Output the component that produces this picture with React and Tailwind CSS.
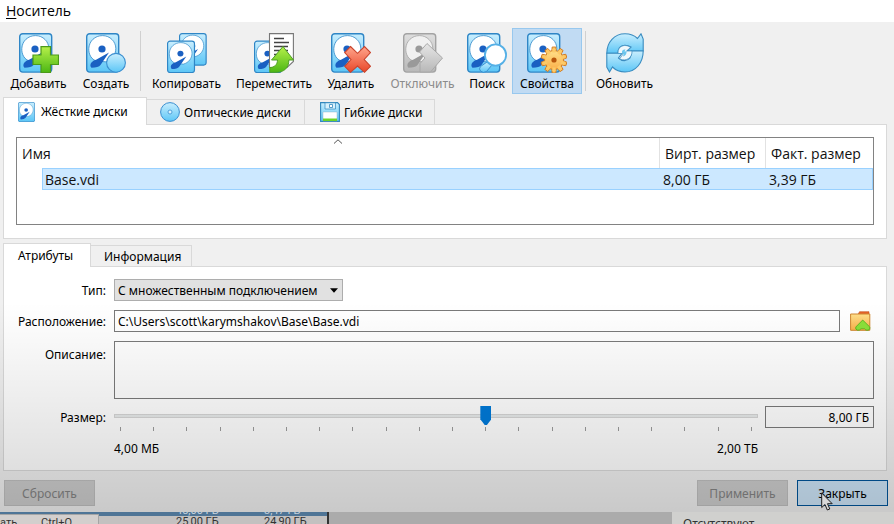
function Gradients() {
  const list = [
    ["blue", "#c9eefe", "#5cc6f6"],
    ["gray", "#dedede", "#b9b9b9"],
    ["green", "#b6f04a", "#4cb714"],
    ["red", "#ffa58c", "#e8482a"],
    ["orange", "#ffe08a", "#fbb04a"],
    ["silver", "#e6e6e6", "#b8b8b8"],
  ];
  return (
    <svg className="absolute size-0" aria-hidden="true">
      <defs>
        {list.map(([id, from, to]) => (
          <linearGradient key={id} id={id} x1="0" y1="0" x2="0" y2="1">
            <stop offset="0" stopColor={from} />
            <stop offset="1" stopColor={to} />
          </linearGradient>
        ))}
      </defs>
    </svg>
  );
}

function Disk({ transform, gray }) {
  const line = gray ? "#a3a3a3" : "#2f86c6";
  const dark = gray ? "#9a9a9a" : "#1a60c2";
  return (
    <g transform={transform}>
      <rect x="0.7" y="0.7" width="32" height="38.4" rx="3" fill={gray ? "url(#gray)" : "url(#blue)"} stroke={line} strokeWidth="1.4" />
      <path d="M10.500 28C5.500 26.500 2.500 21.500 2.800 15.500C3.200 8 9 2.600 16.500 2.600C24 2.600 29.800 8.500 29.800 15.500C29.800 21.500 26 27 19.500 28.800Z" fill={gray ? "#f1f1f1" : "#fff"} stroke={line} strokeWidth="0.8" />
      <circle cx="16" cy="16" r="3.6" fill={dark} />
      <path d="M23 19.500L14.500 32Q12.500 34.800 5.500 34.800Q3.500 33 5 30Q7 27 10.500 26.500Z" fill={dark} />
    </g>
  );
}

const teeth = [0, 36, 72, 108, 144, 180, 216, 252, 288, 324];

function Icon({ kind }) {
  return (
    <svg viewBox="0 0 40 40" className="size-10 shrink-0" aria-hidden="true">
      {["add", "create", "remove", "search", "props"].includes(kind) && <Disk />}
      {kind === "add" && (
        <path d="M22 13.700h9.500v8.300h8v9.500h-8v8h-9.500v-8h-8v-9.500h8z" fill="url(#green)" stroke="#4b9a1a" strokeWidth="1.2" />
      )}
      {kind === "create" && <circle cx="30" cy="29.800" r="9.400" fill="url(#blue)" stroke="#3b8fd0" strokeWidth="1.100" />}
      {kind === "copy" && (
        <>
          <Disk transform="translate(12 0) scale(.83 .82)" />
          <Disk transform="translate(0 7.500) scale(.84 .82)" />
        </>
      )}
      {kind === "move" && (
        <>
          <Disk transform="translate(0 7.500) scale(.84 .82)" />
          <path d="M15.500 .6H39.400V28.500L33 34.500H15.500Z" fill="#fff" stroke="#777" strokeWidth="1.100" />
          <path d="M20 5.500h10M20 9.500h15M20 13.500h14M20 17.500h14M20 21.500h6" stroke="#444" strokeWidth="1.300" />
          <path d="M29 13.500L39.500 27H34.800C35 35 30 39.300 22 39.300H15.800V34.500C20 34.500 23.500 32 23.500 27H17.500Z" fill="url(#green)" stroke="#4ea024" strokeWidth="1" />
        </>
      )}
      {kind === "remove" && (
        <path d="M19.500 13.500L26.500 20.300L33.500 13.500L39.500 19.500L33.200 26.500L39.500 33.300L33.500 39.300L26.500 33L19.500 39.300L13.700 33.300L20 26.500L13.700 19.500Z" fill="url(#red)" stroke="#c9432b" strokeWidth="1.100" />
      )}
      {kind === "eject" && (
        <>
          <Disk gray />
          <path d="M24 10.500L39.500 25L27.500 39H17V30.500L22 25L16.500 19Z" fill="url(#silver)" stroke="#a8a8a8" strokeWidth="1" />
        </>
      )}
      {kind === "search" && (
        <>
          <path d="M20 29L25 32L19.500 38.500Q16 40.500 13.500 38Q11.500 36 13.500 33.500Z" fill="url(#blue)" stroke="#3b8fd0" strokeWidth="1" />
          <circle cx="28.500" cy="22" r="10.600" fill="#fff" stroke="#55b0e6" strokeWidth="1.800" />
        </>
      )}
      {kind === "props" && (
        <>
          {teeth.map((a) => (
            <path key={a} d="M24.700 18.500L25.200 14H28.800L29.300 18.500Z" fill="#fdc660" stroke="#d07a22" strokeWidth=".9" transform={`rotate(${a} 27 27)`} />
          ))}
          <circle cx="27" cy="27" r="9.500" fill="url(#orange)" stroke="#d07a22" strokeWidth=".9" />
          {teeth.map((a) => (
            <path key={a} d="M25.300 19.500V16H28.700V19.500Z" fill="#fdca68" transform={`rotate(${a} 27 27)`} />
          ))}
          <circle cx="27" cy="27" r="2.600" fill="#b8560c" />
        </>
      )}
      {kind === "refresh" && (
        <g stroke="#3a8cc0" strokeWidth="1.100">
          <path d="M1.800 20.300C1.800 9 9.500 .8 20 .8C25.500 .8 29.500 2.500 32.500 5.500L36 .8L38.200 6V18H22L26 14C22 11.500 17 11.500 14.500 14.500Q13 16.500 13 20.300Z" fill="url(#blue)" />
          <path d="M38.200 18C38.200 30 30.500 39 20 39C14.500 39 10.500 37 7.500 34L4.500 39L1.800 34V20.300H17L13.500 25C17 28.500 22 28.500 25 25Q26.500 22.500 26.500 18Z" fill="url(#blue)" />
          <path d="M14 15.500C17.500 11.500 22 11.800 25.500 14.500L21.500 18H27C27.500 24 22 29 14.500 26L18.500 20.500H13Q13 17 14 15.500Z" fill="#f0f8fc" strokeWidth=".7" />
          <path d="M17 20.500V18.500Q17.500 16 20.500 16.500L19.500 18.500L21.500 18.200Q22 22 18 23.500L18.800 20.500Z" fill="#6cc6ee" stroke="none" />
        </g>
      )}
    </svg>
  );
}

const actions = [
  { kind: "add", label: "Добавить", size: "w-[73px]" },
  { kind: "create", label: "Создать", size: "w-[62px]" },
  null,
  { kind: "copy", label: "Копировать", size: "w-[85px]" },
  { kind: "move", label: "Переместить", size: "w-[90px]" },
  { kind: "remove", label: "Удалить", size: "w-[64px]" },
  { kind: "eject", label: "Отключить", size: "w-[79px]", disabled: true },
  { kind: "search", label: "Поиск", size: "w-[50px]" },
  { kind: "props", label: "Свойства", size: "w-[70px]", active: true },
  null,
  { kind: "refresh", label: "Обновить", size: "w-[71px]" },
];

function Toolbar() {
  return (
    <div role="toolbar" className="flex px-[2px] pt-[6px] pb-[3px]">
      {actions.map((a, i) =>
        a ? (
          <button
            key={a.kind}
            disabled={a.disabled}
            className={`flex h-[66px] shrink-0 flex-col items-center gap-[3px] border pt-1 disabled:text-[#8b8b8b] ${a.size} ${
              a.active ? "border-[#98c8ee] bg-[#c1dbf3]" : "border-transparent"
            }`}
          >
            <Icon kind={a.kind} />
            <span className="whitespace-nowrap">{a.label}</span>
          </button>
        ) : (
          <span key={i} className="mx-[3px] mt-[3px] h-[60px] w-px shrink-0 bg-[#d0d0d0]" />
        )
      )}
    </div>
  );
}

function Tab({ selected, className, children }) {
  return (
    <button
      role="tab"
      aria-selected={!!selected}
      className={`flex items-center border border-b-0 border-[#d9d9d9] ${
        selected ? "relative -mb-px self-stretch bg-white" : "mt-[2px] -ml-px bg-[#f0f0f0]"
      } ${className}`}
    >
      {children}
    </button>
  );
}

const ticks = Array.from({ length: 20 }, (_, i) => i);

function MediaTable() {
  return (
    <div className="h-[88px] border border-[#828282] bg-white font-['Open_Sans','Noto_Sans',sans-serif] text-sm leading-[22px] text-[#111]">
      <table className="w-full table-fixed border-separate border-spacing-0 text-left">
        <colgroup>
          <col />
          <col className="w-[106px]" />
          <col className="w-[107px]" />
        </colgroup>
        <thead>
          <tr className="h-[30px]">
            <th className="relative border-r border-[#e2e2e2] pt-px pl-[5px] font-normal">
              Имя
              <svg viewBox="0 0 9 5" className="absolute top-px left-1/2 h-[5px] w-[9px] -translate-x-1/2" aria-hidden="true">
                <path d="M.5 4.500L4.500 .8L8.500 4.500" fill="none" stroke="#555" />
              </svg>
            </th>
            <th className="border-r border-[#e2e2e2] pt-px pl-[5px] font-normal whitespace-nowrap">Вирт. размер</th>
            <th className="pt-px pl-[5px] font-normal whitespace-nowrap">Факт. размер</th>
          </tr>
        </thead>
        <tbody>
          <tr>
            <td className="pl-[25px]">
              <div className="h-[22px] border border-r-0 border-[#99d1ff] bg-[#cce8ff] pl-[2px]">Base.vdi</div>
            </td>
            <td>
              <div className="h-[22px] border-y border-[#99d1ff] bg-[#cce8ff] pl-[3px]">8,00 ГБ</div>
            </td>
            <td>
              <div className="h-[22px] border border-l-0 border-[#99d1ff] bg-[#cce8ff] pl-[3px]">3,39 ГБ</div>
            </td>
          </tr>
        </tbody>
      </table>
    </div>
  );
}

export default function App() {
  return (
    <div className="overflow-hidden bg-[#ababab] font-['Noto_Sans',sans-serif] text-xs leading-4 text-black">
      <Gradients />
      <main className="relative bg-[#f0f0f0]">
        <nav className="flex h-[22px] items-center bg-white px-[6px]">
          <button className="font-['Open_Sans','Noto_Sans',sans-serif] text-sm leading-5">
            <span className="underline underline-offset-2">Н</span>оситель
          </button>
        </nav>
        <Toolbar />

        <section className="mr-[7px] ml-[3px]">
          <div role="tablist" className="flex h-[27px]">
            <Tab selected className="w-[144px] gap-[6px] pl-[14px]">
              <svg viewBox="0 0 33.400 39.800" preserveAspectRatio="none" className="h-5 w-[17px]" aria-hidden="true">
                <Disk />
              </svg>
              Жёсткие диски
            </Tab>
            <Tab className="w-[159px] gap-1 pl-[13px]">
              <svg viewBox="0 0 20 20" className="size-5" aria-hidden="true">
                <circle cx="10" cy="10" r="9.400" fill="url(#blue)" stroke="#3b8fd0" />
                <circle cx="10" cy="10" r="2" fill="#d9f3ff" stroke="#3b8fd0" strokeWidth=".8" />
              </svg>
              <span className="pt-px">Оптические диски</span>
            </Tab>
            <Tab className="w-[131px] gap-1 pl-[15px]">
              <svg viewBox="0 0 20 20" className="size-5" aria-hidden="true">
                <path d="M.6 .6H17.500L19.400 2.500V19.400H.6Z" fill="url(#blue)" stroke="#3187bd" strokeWidth="1.100" />
                <path d="M5 .8H15.500V7H5Z" fill="#d8f1fc" stroke="#3187bd" strokeWidth=".7" />
                <path d="M9.500 2.500H12.500V5.500H9.500Z" fill="#fff" stroke="#3187bd" strokeWidth=".8" />
                <path d="M3 10H17V19H3Z" fill="#fff" stroke="#8ab" strokeWidth=".4" />
                <path d="M3 16.500H17V19H3Z" fill="#6bd42a" />
              </svg>
              <span className="pt-px">Гибкие диски</span>
            </Tab>
          </div>
          <div className="border border-[#d9d9d9] bg-white px-3 pt-3 pb-[13px]">
            <MediaTable />
          </div>
        </section>

        <section className="mt-1 mr-[7px] ml-[3px]">
          <div role="tablist" className="flex h-[23px]">
            <Tab selected className="w-[88px] pl-[14px]">Атрибуты</Tab>
            <Tab className="w-[102px] pl-[13px]">
              <span className="pt-px">Информация</span>
            </Tab>
          </div>
          <div className="grid grid-cols-[90px_1fr] gap-x-2 border border-[#d9d9d9] bg-white px-3 pt-3 pb-[13px]">
            <label htmlFor="type" className="mb-[8px] self-center justify-self-end">Тип:</label>
            <div className="relative mb-[9px] w-[229px]">
              <select id="type" className="block h-[22px] w-full appearance-none border border-[#adadad] bg-[#e1e1e1] pt-px pr-5 pl-[3px]">
                <option>С множественным подключением</option>
              </select>
              <svg viewBox="0 0 8 5" className="pointer-events-none absolute top-[9px] right-[5px] h-[5px] w-2" aria-hidden="true">
                <path d="M0 .3H8L4 4.700Z" />
              </svg>
            </div>

            <label htmlFor="path" className="mb-[8px] self-center justify-self-end whitespace-nowrap">Расположение:</label>
            <div className="mb-[9px] flex">
              <input id="path" defaultValue="C:\Users\scott\karymshakov\Base\Base.vdi" className="h-[22px] min-w-0 flex-1 border border-[#7a7a7a] bg-white px-[3px]" />
              <button aria-label="Выбрать папку" className="flex w-[34px] items-center justify-center pl-[6px]">
                <svg viewBox="0 0 21 20" className="h-5 w-[21px]" aria-hidden="true">
                  <path d="M8 3.500L9.500 .7H19V6H8Z" fill="#e8642a" stroke="#c4501a" strokeWidth=".6" />
                  <path d="M.6 3H19.800V19.300H.6Z" fill="url(#orange)" stroke="#cf8630" strokeWidth="1" />
                  <path d="M12.700 9L19.800 16Q20.500 18.800 18 19.200Q15.500 19.600 14.500 17.800H11Q9.500 19.600 7.500 19.200Q5 18.500 5.800 16Z" fill="#8be03a" stroke="#4fae1c" strokeWidth=".8" />
                </svg>
              </button>
            </div>

            <label htmlFor="about" className="mt-[6px] justify-self-end">Описание:</label>
            <textarea id="about" className="mb-[7px] block h-[58px] w-full resize-none border border-[#7a7a7a] bg-white px-1" />

            <label htmlFor="size" className="mt-[4px] justify-self-end">Размер:</label>
            <div className="flex gap-[7px]">
              <div className="min-w-0 flex-1">
                <input
                  id="size"
                  type="range"
                  min="0"
                  max="19"
                  defaultValue="11"
                  className="block h-5 w-full appearance-none bg-transparent [&::-webkit-slider-runnable-track]:h-1 [&::-webkit-slider-runnable-track]:border [&::-webkit-slider-runnable-track]:border-[#d6d6d6] [&::-webkit-slider-runnable-track]:bg-[#e7eaea] [&::-webkit-slider-thumb]:-mt-[9px] [&::-webkit-slider-thumb]:h-[19px] [&::-webkit-slider-thumb]:w-[11px] [&::-webkit-slider-thumb]:appearance-none [&::-webkit-slider-thumb]:bg-[#007ad9] [&::-webkit-slider-thumb]:[clip-path:polygon(0_0,100%_0,100%_70%,60%_100%,40%_100%,0_70%)]"
                />
                <div className="mt-px flex h-1 justify-between px-[6px]">
                  {ticks.map((t) => (
                    <span key={t} className="h-1 w-px bg-[#9c9c9c]" />
                  ))}
                </div>
                <div className="mt-[10px] flex justify-between">
                  <span>4,00 МБ</span>
                  <span>2,00 ТБ</span>
                </div>
              </div>
              <input aria-label="Размер" defaultValue="8,00 ГБ" className="h-[22px] w-[109px] border border-[#7a7a7a] bg-white px-1 text-right" />
            </div>
          </div>
        </section>

        <footer className="flex gap-[9px] px-[6px] pt-[9px] pb-[6px] pl-1">
          <button disabled className="mr-auto h-[26px] w-[91px] border border-[#bfbfbf] bg-[#cccccc] pt-px text-[#838383]">Сбросить</button>
          <button disabled className="h-[26px] w-[91px] border border-[#bfbfbf] bg-[#cccccc] pt-px text-[#838383]">Применить</button>
          <button className="relative h-[26px] w-[91px] border border-[#005499] bg-[#cce4f7] pt-px">
            Закрыть
            <svg viewBox="0 0 12 19" className="absolute top-[11px] left-[23px] h-[19px] w-3" aria-hidden="true">
              <path d="M.7 1V15.500L4 12.500L6.300 18L8.800 17L6.500 11.700H11.200Z" fill="#fff" stroke="#222" strokeWidth="1" />
            </svg>
          </button>
        </footer>
        <div className="pointer-events-none absolute inset-0 bg-[linear-gradient(to_bottom,rgba(0,0,0,0)_59%,rgba(0,0,0,0.07)_78%,rgba(0,0,0,0.12)_91%,rgba(0,0,0,0.16)_100%)]" />
      </main>

      <div className="flex h-3 overflow-hidden font-[Roboto,sans-serif] text-[11px] text-[#333]">
        <div className="relative w-[329px] shrink-0 overflow-hidden border-r-2 border-[#333] bg-[#c3c1c0]">
          <div className="flex h-1 items-end overflow-hidden bg-[#4f7596] pl-[176px] leading-[10px] text-[#c5d2dd]">
            <span className="w-[88px] shrink-0">48,00 ГБ</span>
            <span>3,47 ГБ</span>
          </div>
          <div className="flex h-2 overflow-hidden pl-[176px] leading-3">
            <span className="w-[88px] shrink-0">25,00 ГБ</span>
            <span>24,90 ГБ</span>
          </div>
          <div className="absolute top-[2px] left-0 flex h-[10px] w-[99px] overflow-hidden border-t border-r border-[#a5a5a5] bg-[#d3cfcd] leading-4">
            <span className="w-[41px]">ать</span>
            <span>Ctrl+Q</span>
          </div>
        </div>
        <div className="ml-auto w-[222px] overflow-hidden bg-[#d0d0ce] pt-1 pl-[11px] font-['Noto_Sans',sans-serif] text-xs">Отсутствуют</div>
      </div>
    </div>
  );
}
